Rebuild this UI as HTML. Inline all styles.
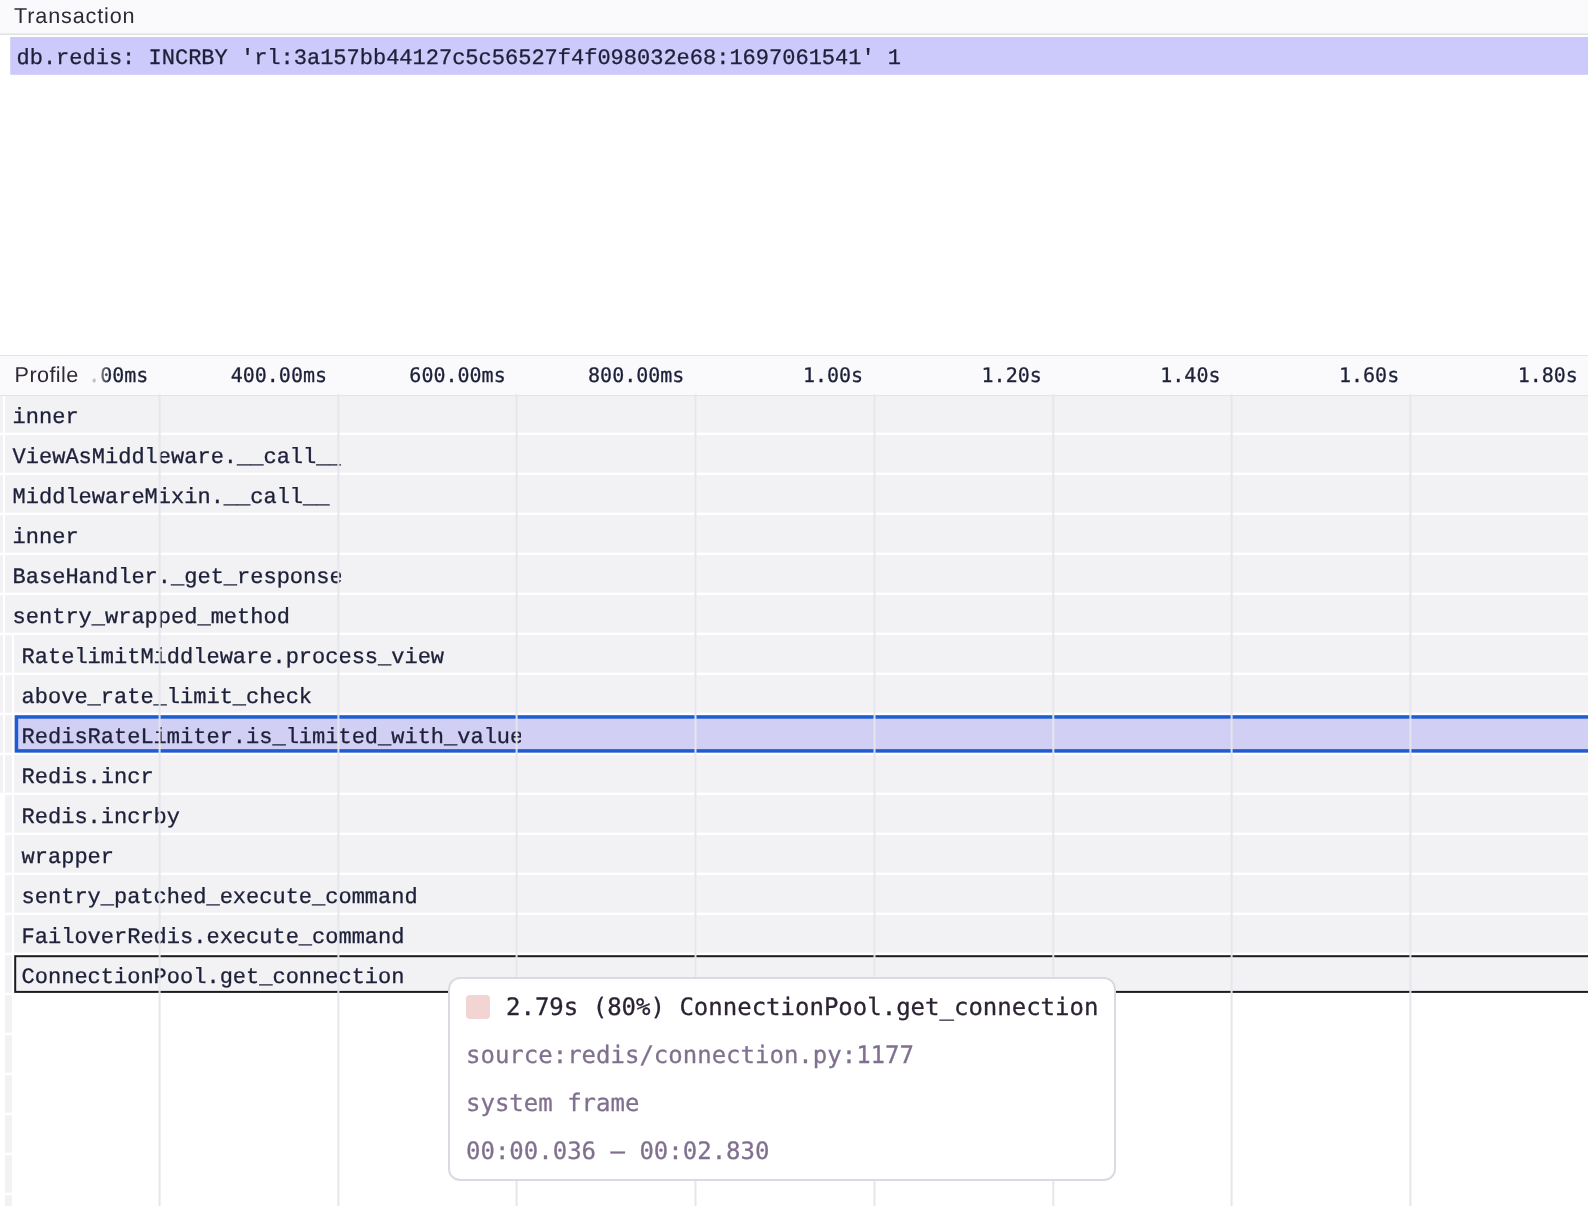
<!DOCTYPE html>
<html lang="en">
<head>
<meta charset="utf-8">
<title>Profile flamegraph</title>
<style>
html,body{margin:0;padding:0;background:#fff;}
body{text-rendering:geometricPrecision;width:1588px;height:1206px;position:relative;overflow:hidden;font-family:"Liberation Sans", sans-serif;}
.wrap{position:absolute;left:0;top:0;width:1588px;height:1206px;will-change:transform;}
.canvas{position:absolute;left:0;top:0;display:block;text-rendering:geometricPrecision;}
.canvas text{stroke:#1d2038;stroke-width:0.3px;}
.hdr{position:absolute;left:0;width:1588px;background:#fafafc;box-sizing:border-box;}
.hdr.tx{top:0;height:35px;background:linear-gradient(to bottom,#fafafc 0,#fafafc 33px,#ebebee 33px,#ebebee 34px,#e2e3e7 34px,#e2e3e7 35px);}
.hdr.pf{top:355px;height:41px;border-top:1px solid #e3e4e9;border-bottom:1px solid #e4e4e9;}
.lbl{position:absolute;left:0;font-family:"Liberation Sans", sans-serif;font-size:21.6px;letter-spacing:0.85px;line-height:24px;color:#2f2936;white-space:nowrap;padding-left:14px;}
.lbl.tx{top:4px;}
.lbl.pf{top:363px;height:26px;padding-left:14.6px;letter-spacing:0.4px;}
.fade{position:absolute;left:0;top:356px;height:38px;width:110px;background:linear-gradient(to right,#fafafc 0,#fafafc 88px,rgba(250,250,252,0) 110px);}
.tip{position:absolute;left:448px;top:977px;width:668px;height:204px;box-sizing:border-box;border:2px solid #ddd9e3;border-radius:12px;background:#fff;font-family:"DejaVu Sans Mono", "Liberation Mono", monospace;font-size:24px;color:#80708f;-webkit-text-stroke:0.3px;}
.tip .sw{position:absolute;left:16px;top:16px;width:24px;height:24px;border-radius:4px;background:#f2d4d3;}
.tip .ln{position:absolute;left:16px;white-space:pre;line-height:28px;height:28px;}
.tip .l1{left:56px;top:14px;color:#2b2233;}
.tip .l2{top:62px;}
.tip .l3{top:110px;}
.tip .l4{top:158px;}
</style>
</head>
<body>
<div class="wrap">
<div class="hdr tx"></div>
<div class="hdr pf"></div>
<svg class="canvas" width="1588" height="1206" viewBox="0 0 1588 1206">
<defs>
<clipPath id="c1"><rect x="0" y="435.1" width="341" height="40"/></clipPath>
<clipPath id="c4"><rect x="0" y="555.1" width="341" height="40"/></clipPath>
<clipPath id="c8"><rect x="0" y="715.1" width="521" height="40"/></clipPath>
</defs>
<rect x="10.2" y="37" width="1588" height="37.8" fill="#cccafa"/>
<text x="16.5" y="64" font-family='"Liberation Mono", monospace' font-size="22" fill="#1d2038">db.redis: INCRBY 'rl:3a157bb44127c5c56527f4f098032e68:1697061541' 1</text>
<text x="148.3" y="382" text-anchor="end" font-family='"DejaVu Sans Mono", "Liberation Mono", monospace' font-size="20" fill="#1d2038">200.00ms</text>
<text x="327.0" y="382" text-anchor="end" font-family='"DejaVu Sans Mono", "Liberation Mono", monospace' font-size="20" fill="#1d2038">400.00ms</text>
<text x="505.7" y="382" text-anchor="end" font-family='"DejaVu Sans Mono", "Liberation Mono", monospace' font-size="20" fill="#1d2038">600.00ms</text>
<text x="684.4" y="382" text-anchor="end" font-family='"DejaVu Sans Mono", "Liberation Mono", monospace' font-size="20" fill="#1d2038">800.00ms</text>
<text x="863.1" y="382" text-anchor="end" font-family='"DejaVu Sans Mono", "Liberation Mono", monospace' font-size="20" fill="#1d2038">1.00s</text>
<text x="1041.8" y="382" text-anchor="end" font-family='"DejaVu Sans Mono", "Liberation Mono", monospace' font-size="20" fill="#1d2038">1.20s</text>
<text x="1220.5" y="382" text-anchor="end" font-family='"DejaVu Sans Mono", "Liberation Mono", monospace' font-size="20" fill="#1d2038">1.40s</text>
<text x="1399.2" y="382" text-anchor="end" font-family='"DejaVu Sans Mono", "Liberation Mono", monospace' font-size="20" fill="#1d2038">1.60s</text>
<text x="1577.9" y="382" text-anchor="end" font-family='"DejaVu Sans Mono", "Liberation Mono", monospace' font-size="20" fill="#1d2038">1.80s</text>
<rect x="0" y="395.1" width="2.9" height="37.6" fill="#f2f2f5"/>
<rect x="5.05" y="395.1" width="1588" height="37.6" fill="#f2f2f5"/>
<text x="12.6" y="422.9" font-family='"Liberation Mono", monospace' font-size="22" fill="#1d2038">inner</text>
<rect x="0" y="435.1" width="2.9" height="37.6" fill="#f2f2f5"/>
<rect x="5.05" y="435.1" width="1588" height="37.6" fill="#f2f2f5"/>
<text x="12.6" y="462.9" font-family='"Liberation Mono", monospace' font-size="22" fill="#1d2038" clip-path="url(#c1)">ViewAsMiddleware.__call__</text>
<rect x="0" y="475.1" width="2.9" height="37.6" fill="#f2f2f5"/>
<rect x="5.05" y="475.1" width="1588" height="37.6" fill="#f2f2f5"/>
<text x="12.6" y="502.9" font-family='"Liberation Mono", monospace' font-size="22" fill="#1d2038">MiddlewareMixin.__call__</text>
<rect x="0" y="515.1" width="2.9" height="37.6" fill="#f2f2f5"/>
<rect x="5.05" y="515.1" width="1588" height="37.6" fill="#f2f2f5"/>
<text x="12.6" y="542.9" font-family='"Liberation Mono", monospace' font-size="22" fill="#1d2038">inner</text>
<rect x="0" y="555.1" width="2.9" height="37.6" fill="#f2f2f5"/>
<rect x="5.05" y="555.1" width="1588" height="37.6" fill="#f2f2f5"/>
<text x="12.6" y="582.9" font-family='"Liberation Mono", monospace' font-size="22" fill="#1d2038" clip-path="url(#c4)">BaseHandler._get_response</text>
<rect x="0" y="595.1" width="2.9" height="37.6" fill="#f2f2f5"/>
<rect x="5.05" y="595.1" width="1588" height="37.6" fill="#f2f2f5"/>
<text x="12.6" y="622.9" font-family='"Liberation Mono", monospace' font-size="22" fill="#1d2038">sentry_wrapped_method</text>
<rect x="0" y="635.1" width="2.9" height="37.6" fill="#f2f2f5"/>
<rect x="5.05" y="635.1" width="6.95" height="37.6" fill="#f2f2f5"/>
<rect x="14.0" y="635.1" width="1588" height="37.6" fill="#f2f2f5"/>
<text x="21.6" y="662.9" font-family='"Liberation Mono", monospace' font-size="22" fill="#1d2038">RatelimitMiddleware.process_view</text>
<rect x="0" y="675.1" width="2.9" height="37.6" fill="#f2f2f5"/>
<rect x="5.05" y="675.1" width="6.95" height="37.6" fill="#f2f2f5"/>
<rect x="14.0" y="675.1" width="1588" height="37.6" fill="#f2f2f5"/>
<text x="21.6" y="702.9" font-family='"Liberation Mono", monospace' font-size="22" fill="#1d2038">above_rate_limit_check</text>
<rect x="0" y="715.1" width="2.9" height="37.6" fill="#f2f2f5"/>
<rect x="5.05" y="715.1" width="6.95" height="37.6" fill="#f2f2f5"/>
<rect x="14.0" y="715.1" width="1588" height="37.6" fill="#f2f2f5"/>
<rect x="16.45" y="716.95" width="1588" height="33.95" fill="#d1d0f4" stroke="#1f5cd2" stroke-width="3.5"/>
<text x="21.6" y="742.9" font-family='"Liberation Mono", monospace' font-size="22" fill="#1d2038" clip-path="url(#c8)">RedisRateLimiter.is_limited_with_value</text>
<rect x="0" y="755.1" width="2.9" height="37.6" fill="#f2f2f5"/>
<rect x="5.05" y="755.1" width="6.95" height="37.6" fill="#f2f2f5"/>
<rect x="14.0" y="755.1" width="1588" height="37.6" fill="#f2f2f5"/>
<text x="21.6" y="782.9" font-family='"Liberation Mono", monospace' font-size="22" fill="#1d2038">Redis.incr</text>
<rect x="5.05" y="795.1" width="6.95" height="37.6" fill="#f2f2f5"/>
<rect x="14.0" y="795.1" width="1588" height="37.6" fill="#f2f2f5"/>
<text x="21.6" y="822.9" font-family='"Liberation Mono", monospace' font-size="22" fill="#1d2038">Redis.incrby</text>
<rect x="5.05" y="835.1" width="6.95" height="37.6" fill="#f2f2f5"/>
<rect x="14.0" y="835.1" width="1588" height="37.6" fill="#f2f2f5"/>
<text x="21.6" y="862.9" font-family='"Liberation Mono", monospace' font-size="22" fill="#1d2038">wrapper</text>
<rect x="5.05" y="875.1" width="6.95" height="37.6" fill="#f2f2f5"/>
<rect x="14.0" y="875.1" width="1588" height="37.6" fill="#f2f2f5"/>
<text x="21.6" y="902.9" font-family='"Liberation Mono", monospace' font-size="22" fill="#1d2038">sentry_patched_execute_command</text>
<rect x="5.05" y="915.1" width="6.95" height="37.6" fill="#f2f2f5"/>
<rect x="14.0" y="915.1" width="1588" height="37.6" fill="#f2f2f5"/>
<text x="21.6" y="942.9" font-family='"Liberation Mono", monospace' font-size="22" fill="#1d2038">FailoverRedis.execute_command</text>
<rect x="5.05" y="955.1" width="6.95" height="37.6" fill="#f2f2f5"/>
<rect x="15.20" y="956.2" width="1588" height="35.7" fill="#f2f2f5" stroke="#1c1c1f" stroke-width="2"/>
<text x="21.6" y="982.9" font-family='"Liberation Mono", monospace' font-size="22" fill="#1d2038">ConnectionPool.get_connection</text>
<rect x="5.05" y="995.1" width="6.95" height="37.6" fill="#f2f2f5"/>
<rect x="5.05" y="1035.1" width="6.95" height="37.6" fill="#f2f2f5"/>
<rect x="5.05" y="1075.1" width="6.95" height="37.6" fill="#f2f2f5"/>
<rect x="5.05" y="1115.1" width="6.95" height="37.6" fill="#f2f2f5"/>
<rect x="5.05" y="1155.1" width="6.95" height="37.6" fill="#f2f2f5"/>
<rect x="5.05" y="1195.1" width="6.95" height="37.6" fill="#f2f2f5"/>
<rect x="0" y="395" width="1588" height="1.1" fill="#e3e3e8"/>
<rect x="158.6" y="394.2" width="2" height="1206" fill="#e5e6eb" fill-opacity="0.95"/>
<rect x="337.4" y="394.2" width="2" height="1206" fill="#e5e6eb" fill-opacity="0.95"/>
<rect x="515.6" y="394.2" width="2" height="1206" fill="#e5e6eb" fill-opacity="0.95"/>
<rect x="694.5" y="394.2" width="2" height="1206" fill="#e5e6eb" fill-opacity="0.95"/>
<rect x="873.5" y="394.2" width="2" height="1206" fill="#e5e6eb" fill-opacity="0.95"/>
<rect x="1052.3" y="394.2" width="2" height="1206" fill="#e5e6eb" fill-opacity="0.95"/>
<rect x="1230.6" y="394.2" width="2" height="1206" fill="#e5e6eb" fill-opacity="0.95"/>
<rect x="1409.4" y="394.2" width="2" height="1206" fill="#e5e6eb" fill-opacity="0.95"/>
</svg>
<div class="fade"></div>
<div class="lbl tx">Transaction</div>
<div class="lbl pf">Profile</div>
<div class="tip">
<span class="sw"></span>
<div class="ln l1">2.79s (80%) ConnectionPool.get_connection</div>
<div class="ln l2">source:redis/connection.py:1177</div>
<div class="ln l3">system frame</div>
<div class="ln l4">00:00.036 – 00:02.830</div>
</div>
</div>
</body>
</html>
